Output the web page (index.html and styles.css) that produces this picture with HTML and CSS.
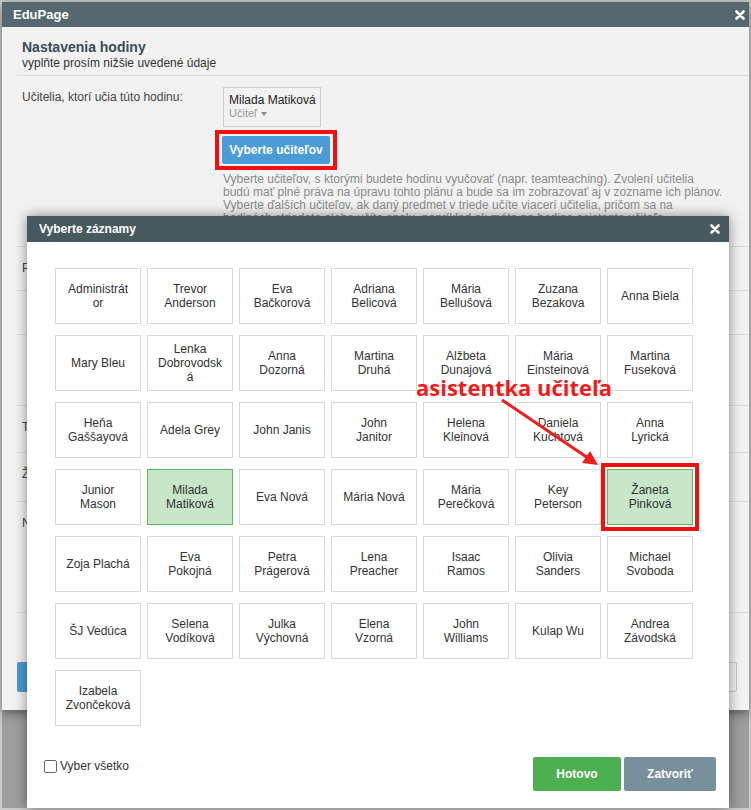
FILE: index.html
```html
<!DOCTYPE html>
<html lang="sk">
<head>
<meta charset="utf-8">
<title>EduPage</title>
<link rel="stylesheet" href="styles.css">
</head>
<body>
<div class="frame">
  <div class="dialog">
    <div class="dlg-head">
      <span class="dlg-title">EduPage</span>
      <svg class="x-icon" width="10" height="10" viewBox="0 0 10 10"><path d="M1.5 1.5 L8.5 8.5 M8.5 1.5 L1.5 8.5" stroke="#fff" stroke-width="2.6" stroke-linecap="round"/></svg>
    </div>
    <div class="dlg-body">
      <div class="intro">
        <div class="intro-title">Nastavenia hodiny</div>
        <div class="intro-sub">vyplňte prosím nižšie uvedené údaje</div>
      </div>
      <div class="frow row-teachers">
        <div class="flabel">Učitelia, ktorí učia túto hodinu:</div>
        <div class="fvalue">
          <div class="tcard">
            <div class="tname">Milada Matiková</div>
            <div class="trole">Učiteľ <span class="caret"></span></div>
          </div>
          <div class="btn-mark"><button class="btn-blue">Vyberte učiteľov</button></div>
          <div class="help">Vyberte učiteľov, s ktorými budete hodinu vyučovať (napr. teamteaching). Zvolení učitelia<br>budú mať plné práva na úpravu tohto plánu a bude sa im zobrazovať aj v zozname ich plánov.<br>Vyberte ďalších učiteľov, ak daný predmet v triede učíte viacerí učitelia, pričom sa na<br>hodinách striedate alebo učíte spolu, napríklad ak máte na hodine asistenta učiteľa.</div>
        </div>
      </div>
      <div class="frow row-p"><div class="flabel">Predmet:</div></div>
      <div class="frow row-a"><div class="flabel"></div></div>
      <div class="frow row-b"><div class="flabel"></div></div>
      <div class="frow row-t"><div class="flabel">Trieda:</div></div>
      <div class="frow row-z"><div class="flabel">Žiaci:</div></div>
      <div class="frow row-n"><div class="flabel">Nastavenia:</div></div>
    </div>
    <div class="dlg-foot">
      <button class="btn-save">Uložiť</button>
      <button class="btn-cancel">Zrušiť</button>
    </div>
  </div>

  <div class="modal">
    <div class="modal-head">
      <span>Vyberte záznamy</span>
      <svg class="x-icon" width="10" height="10" viewBox="0 0 10 10"><path d="M1.5 1.5 L8.5 8.5 M8.5 1.5 L1.5 8.5" stroke="#fff" stroke-width="2.6" stroke-linecap="round"/></svg>
    </div>
    <div class="modal-body">
      <div class="grid">
        <div class="cell">Administrátor</div>
        <div class="cell">Trevor Anderson</div>
        <div class="cell">Eva Bačkorová</div>
        <div class="cell">Adriana Belicová</div>
        <div class="cell">Mária Bellušová</div>
        <div class="cell">Zuzana Bezakova</div>
        <div class="cell">Anna Biela</div>

        <div class="cell">Mary Bleu</div>
        <div class="cell">Lenka Dobrovodská</div>
        <div class="cell">Anna Dozorná</div>
        <div class="cell">Martina Druhá</div>
        <div class="cell">Alžbeta Dunajová</div>
        <div class="cell">Mária Einsteinová</div>
        <div class="cell">Martina Fuseková</div>

        <div class="cell">Heňa Gaššayová</div>
        <div class="cell">Adela Grey</div>
        <div class="cell">John Janis</div>
        <div class="cell">John Janitor</div>
        <div class="cell">Helena Kleinová</div>
        <div class="cell">Daniela Kuchtová</div>
        <div class="cell">Anna Lyrická</div>

        <div class="cell">Junior Mason</div>
        <div class="cell selected">Milada Matiková</div>
        <div class="cell">Eva Nová</div>
        <div class="cell">Mária Nová</div>
        <div class="cell">Mária Perečková</div>
        <div class="cell">Key Peterson</div>
        <div class="cell selected marked">Žaneta Pinková</div>

        <div class="cell">Zoja Plachá</div>
        <div class="cell">Eva Pokojná</div>
        <div class="cell">Petra Prágerová</div>
        <div class="cell">Lena Preacher</div>
        <div class="cell">Isaac Ramos</div>
        <div class="cell">Olivia Sanders</div>
        <div class="cell">Michael Svoboda</div>

        <div class="cell">ŠJ Vedúca</div>
        <div class="cell">Selena Vodíková</div>
        <div class="cell">Julka Výchovná</div>
        <div class="cell">Elena Vzorná</div>
        <div class="cell">John Williams</div>
        <div class="cell">Kulap Wu</div>
        <div class="cell">Andrea Závodská</div>

        <div class="cell">Izabela Zvončeková</div>
      </div>
    </div>
    <div class="modal-foot">
      <label class="check"><span class="box"></span>Vyber všetko</label>
      <div class="actions">
        <button class="btn-done">Hotovo</button>
        <button class="btn-close">Zatvoriť</button>
      </div>
    </div>
  </div>

  <div class="annot-text">asistentka učiteľa</div>
  <svg class="annot-arrow" width="747" height="806" viewBox="0 0 747 806">
    <line x1="500" y1="398" x2="586" y2="456" stroke="#f01c1c" stroke-width="3"/>
    <polygon points="596,463 580,461 588,449" fill="#f01c1c"/>
  </svg>
</div>
</body>
</html>
```

FILE: styles.css
```css
* { box-sizing: border-box; }
html, body { margin: 0; padding: 0; }
body {
  width: 751px;
  height: 810px;
  overflow: hidden;
  background: #9e9e9e;
  font-family: "Liberation Sans", Arial, sans-serif;
  color: #333;
}
button { font-family: inherit; border: 0; cursor: pointer; }

.frame {
  position: relative;
  width: 751px;
  height: 810px;
  border: 2px solid #cacaca;
  background: #9e9e9e;
}

/* back dialog */
.dialog {
  width: 747px;
  height: 708px;
  background: #f2f2f2;
  box-shadow: 0 3px 10px rgba(0,0,0,0.45);
  display: flex;
  flex-direction: column;
}
.dlg-head {
  height: 25px;
  flex: none;
  background: #55686f;
  display: flex;
  align-items: center;
  justify-content: space-between;
  padding: 0 4px 0 11px;
}
.dlg-title { color: #fff; font-weight: bold; font-size: 13px; }
.x-icon { display: block; }

.intro {
  margin-left: 15px;
  height: 49px;
  padding: 12px 0 0 5px;
  border-bottom: 1px solid #dcdcdc;
}
.intro-title { font-size: 14px; line-height: 16px; font-weight: bold; color: #3d4a52; }
.intro-sub { font-size: 12px; line-height: 14px; color: #333; margin-top: 1px; }

.frow {
  margin-left: 15px;
  border-bottom: 1px solid #dcdcdc;
  display: flex;
  padding-top: 15px;
}
.flabel {
  width: 206px;
  flex: none;
  padding-left: 5px;
  font-size: 12px;
  line-height: 13px;
  color: #444;
}
.row-teachers { height: 171px; padding-top: 11px; }
.row-teachers .flabel { margin-top: 4px; }
.row-p { height: 44px; }
.row-a { height: 44px; }
.row-b { height: 71px; }
.row-t { height: 47px; }
.row-z { height: 49px; }
.row-n { height: 111px; }

.fvalue { display: flex; flex-direction: column; align-items: flex-start; }
.tcard {
  width: 98px;
  height: 40px;
  border: 1px solid #cfcfcf;
  padding: 5px 5px 0;
  white-space: nowrap;
}
.tname { font-size: 12px; line-height: 14px; color: #222; }
.trole { font-size: 11px; line-height: 13px; color: #999; display: flex; align-items: center; gap: 4px; }
.caret {
  width: 0; height: 0;
  border-left: 3px solid transparent;
  border-right: 3px solid transparent;
  border-top: 4px solid #888;
}
.btn-mark {
  margin: 3px 0 0 -8px;
  border: 4px solid #f20f0f;
  padding: 2px 3px;
}
.btn-blue {
  display: block;
  width: 108px;
  height: 28px;
  background: #4a9bd6;
  color: #fff;
  font-weight: bold;
  font-size: 12px;
  border-radius: 2px;
}
.help {
  margin-top: 3px;
  font-size: 12px;
  line-height: 13px;
  color: #8a8a8a;
  white-space: nowrap;
}

.dlg-foot {
  flex: 1;
  display: flex;
  justify-content: space-between;
  align-items: flex-start;
  padding: 49px 12px 0 15px;
}
.btn-save {
  width: 80px; height: 30px;
  background: #4a9bd6; color: #fff;
  font-size: 12px; font-weight: bold;
  border-radius: 2px;
}
.btn-cancel {
  width: 70px; height: 30px;
  background: #f2f2f2; color: #555;
  border: 1px solid #c4c4c4;
  font-size: 12px;
  border-radius: 2px;
}

/* front modal */
.modal {
  position: absolute;
  left: 25px;
  top: 214px;
  width: 702px;
  height: 592px;
  background: #fff;
  box-shadow: 0 0 12px rgba(0,0,0,0.45);
  display: flex;
  flex-direction: column;
}
.modal-head {
  height: 26px;
  flex: none;
  background: #47595f;
  color: #fff;
  font-size: 12px;
  font-weight: bold;
  display: flex;
  align-items: center;
  justify-content: space-between;
  padding: 0 9px 0 12px;
}
.modal-body { padding: 26px 0 0 28px; }
.grid {
  display: grid;
  grid-template-columns: repeat(7, 86px);
  grid-auto-rows: 56px;
  column-gap: 6px;
  row-gap: 11px;
}
.cell {
  border: 1px solid #d8d8d8;
  display: flex;
  align-items: center;
  justify-content: center;
  text-align: center;
  padding: 0 9.5px;
  font-size: 12px;
  line-height: 14px;
  color: #333;
  overflow-wrap: anywhere;
}
.cell.selected { background: #c8e6c9; border-color: #5cb85c; }
.cell.marked { outline: 4px solid #f20f0f; outline-offset: 2px; }

.modal-foot {
  margin-top: 31px;
  display: flex;
  justify-content: space-between;
  align-items: flex-start;
  padding: 0 13px 0 17px;
}
.check {
  margin-top: 2px;
  display: flex;
  align-items: center;
  font-size: 12px;
  line-height: 14px;
  color: #333;
}
.box {
  width: 13px; height: 13px;
  border: 1px solid #666;
  border-radius: 2px;
  margin-right: 3px;
  background: #fff;
}
.actions { display: flex; gap: 3px; }
.btn-done, .btn-close {
  height: 34px;
  color: #fff;
  font-size: 12px;
  font-weight: bold;
  border-radius: 2px;
}
.btn-done { width: 88px; background: #4caf50; }
.btn-close { width: 92px; background: #78909c; }

/* annotation */
.annot-text {
  position: absolute;
  left: 414px;
  top: 374px;
  font-family: "Open Sans", "Liberation Sans", sans-serif;
  font-weight: bold;
  font-size: 22px;
  line-height: 22px;
  color: #f01c1c;
  white-space: nowrap;
}
.annot-arrow {
  position: absolute;
  left: 0;
  top: 0;
  pointer-events: none;
}
```
